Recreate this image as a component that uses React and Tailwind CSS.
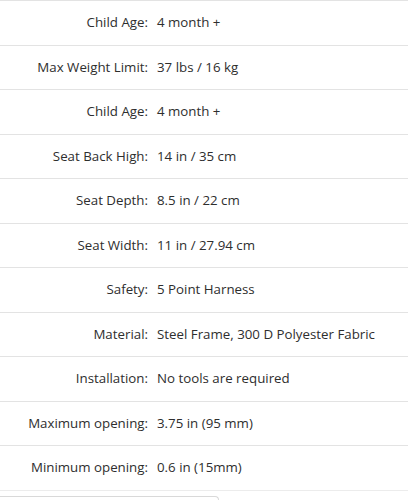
import React from 'react';

const specs = [
  ['Child Age:', '4 month +'],
  ['Max Weight Limit:', '37 lbs / 16 kg'],
  ['Child Age:', '4 month +'],
  ['Seat Back High:', '14 in / 35 cm'],
  ['Seat Depth:', '8.5 in / 22 cm'],
  ['Seat Width:', '11 in / 27.94 cm'],
  ['Safety:', '5 Point Harness'],
  ['Material:', 'Steel Frame, 300 D Polyester Fabric'],
  ['Installation:', 'No tools are required'],
  ['Maximum opening:', '3.75 in (95 mm)'],
  ['Minimum opening:', '0.6 in (15mm)'],
];

/* 仕様テーブル行 */
const SpecRow = ({ label, value }) => (
  <div className="flex items-center h-[44.5px] pt-[1px] border-t border-[#e3e3e3] box-border">
    <div className="w-[148px] shrink-0 text-right">{label}</div>
    <div className="pl-[9px]">{value}</div>
  </div>
);

export default function App() {
  return (
    <div
      className="w-[408px] h-[500px] bg-white text-[#2e2e2e] text-[13.3px] overflow-hidden"
      style={{ fontFamily: '"Open Sans", "Liberation Sans", sans-serif' }}
    >
      {specs.map(([label, value], i) => (
        <SpecRow key={i} label={label} value={value} />
      ))}
      <div className="border-t border-[#ececec] h-[6px]" />
      <div className="w-[219px] h-[10px] border-t border-r border-[#d9d9d9] rounded-tr-sm" />
    </div>
  );
}
